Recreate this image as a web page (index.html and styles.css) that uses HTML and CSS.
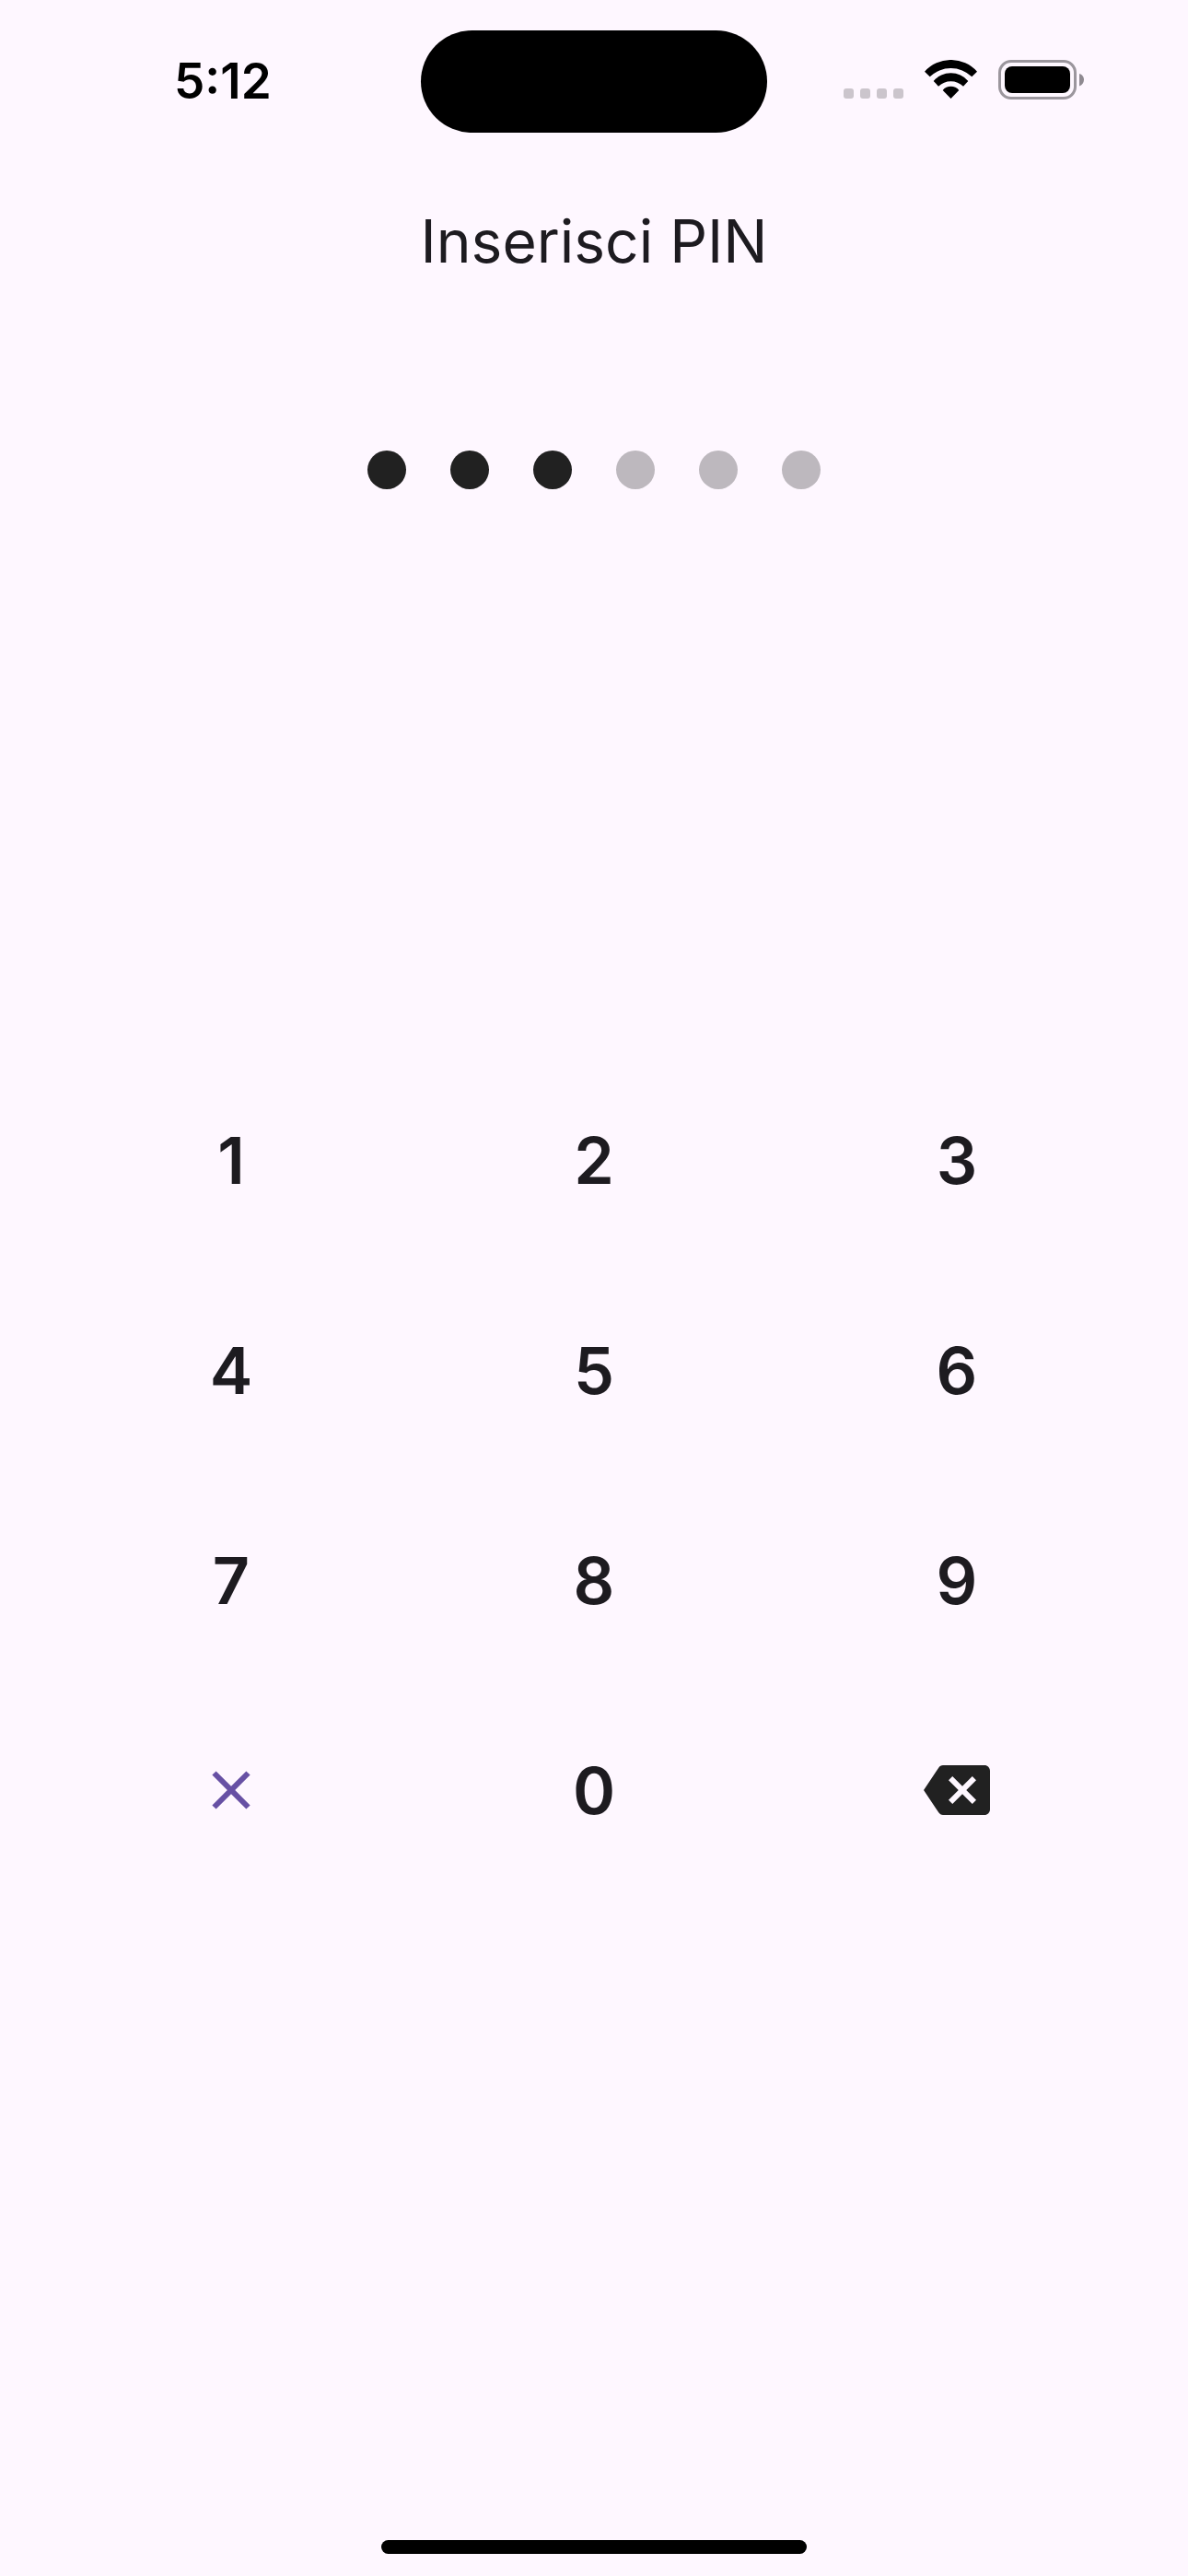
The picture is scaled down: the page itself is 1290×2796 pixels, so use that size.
FILE: index.html
```
<!DOCTYPE html>
<html lang="it">
<head>
  <meta charset="UTF-8" />
  <meta name="viewport" content="width=device-width, initial-scale=1" />
  <title>Inserisci PIN</title>
  <link rel="stylesheet" href="styles.css">
</head>
<body>
  <header class="status-bar">
    <div class="time">5:12</div>
    <div class="island"></div>
    <div class="status-icons">
      <svg width="65" height="42" viewBox="0 0 65 42" fill="#cbc5cc">
        <rect x="0" y="31" width="11" height="11" rx="3" />
        <rect x="18" y="31" width="11" height="11" rx="3" />
        <rect x="36" y="31" width="11" height="11" rx="3" />
        <rect x="54" y="31" width="11" height="11" rx="3" />
      </svg>
      <svg width="57" height="42" viewBox="0 0 57 42">
        <path d="M0 12.7A38.3 38.3 0 0 1 57 12.7L51.3 18.3A32.6 32.6 0 0 0 5.7 18.3Z" />
        <path d="M9.7 23A24.7 24.7 0 0 1 47.3 23L42 28.7A19.5 19.5 0 0 0 15 28.7Z" />
        <path d="M19.7 33A11.1 11.1 0 0 1 37.3 33L28.5 42Z" />
      </svg>
      <svg width="93" height="43" viewBox="0 0 93 43">
        <rect x="1.5" y="1.5" width="82" height="40" rx="12.5" fill="none" stroke="#9b969d" stroke-width="3" />
        <rect x="7" y="7" width="71" height="29" rx="8" />
        <path d="M88 15C91.5 16 93 19 93 21.5S91.5 27 88 28.5Z" fill="#8f8a91" />
      </svg>
    </div>
  </header>

  <main class="pin-screen">
    <h1>Inserisci PIN</h1>
    <div class="dots" id="dots">
      <span class="dot filled"></span>
      <span class="dot filled"></span>
      <span class="dot filled"></span>
      <span class="dot"></span>
      <span class="dot"></span>
      <span class="dot"></span>
    </div>
    <div class="keypad" id="keypad">
      <button type="button" class="key">1</button>
      <button type="button" class="key">2</button>
      <button type="button" class="key">3</button>
      <button type="button" class="key">4</button>
      <button type="button" class="key">5</button>
      <button type="button" class="key">6</button>
      <button type="button" class="key">7</button>
      <button type="button" class="key">8</button>
      <button type="button" class="key">9</button>
      <button type="button" class="key cancel" aria-label="Annulla">
        <svg width="42" height="42" viewBox="0 0 42 42" fill="none" stroke="currentColor" stroke-width="6">
          <path d="M2.5 2.5L39.5 39.5M39.5 2.5L2.5 39.5" />
        </svg>
      </button>
      <button type="button" class="key">0</button>
      <button type="button" class="key delete" aria-label="Cancella">
        <svg width="72" height="72" viewBox="0 0 24 24" fill="currentColor">
          <path d="M22 3H7c-.69 0-1.23.35-1.59.88L0 12l5.41 8.11c.36.53.9.89 1.59.89h15c1.1 0 2-.9 2-2V5c0-1.1-.9-2-2-2zm-3 12.59L17.59 17 14 13.41 10.41 17 9 15.59 12.59 12 9 8.41 10.41 7 14 10.59 17.59 7 19 8.41 15.41 12 19 15.59z" />
        </svg>
      </button>
    </div>
  </main>

  <div class="home-indicator"></div>

  <script>
    const dots = document.querySelectorAll('#dots .dot');
    let count = 3;

    document.getElementById('keypad').addEventListener('click', (e) => {
      const key = e.target.closest('.key');
      if (!key) return;

      if (key.classList.contains('cancel')) {
        count = 0;
      } else if (key.classList.contains('delete')) {
        count = Math.max(0, count - 1);
      } else {
        count = Math.min(dots.length, count + 1);
      }

      dots.forEach((dot, i) => dot.classList.toggle('filled', i < count));
    });
  </script>
</body>
</html>
```

FILE: styles.css
```
* {
  box-sizing: border-box;
}
body {
  margin: 0;
  min-height: 100vh;
  display: flex;
  flex-direction: column;
  background: #fef7ff;
  color: #1d1b20;
  font-family: Inter, Roboto, sans-serif;
}
svg {
  display: block;
}
.status-bar {
  display: grid;
  grid-template-columns: 1fr 376px 1fr;
  align-items: center;
  height: 177px;
  color: #000;
}
.time {
  padding: 0 0 2px 189px;
  font-size: 53px;
  line-height: 64px;
  font-weight: 600;
}
.island {
  height: 111px;
  border-radius: 56px;
  background: #000;
}
.status-icons {
  display: flex;
  justify-content: flex-end;
  gap: 23px;
  padding: 0 113px 4px 0;
}
.pin-screen {
  padding: 43px 54px;
}
h1 {
  margin: 0;
  text-align: center;
  font-size: 64px;
  line-height: 84px;
  font-weight: 400;
}
.dots {
  display: flex;
  justify-content: center;
  gap: 48px;
  margin: 185px 0 614px;
}
.dot {
  width: 42px;
  height: 42px;
  border-radius: 50%;
  background: #bdb8be;
}
.dot.filled {
  background: #212121;
}
.keypad {
  display: grid;
  grid-template-columns: repeat(3, 1fr);
  grid-auto-rows: 228px;
}
.key {
  display: flex;
  justify-content: center;
  align-items: center;
  padding: 0;
  border: none;
  border-radius: 114px;
  background: none;
  color: inherit;
  font-family: inherit;
  font-size: 70px;
  font-weight: 600;
  cursor: pointer;
}
.key:active {
  background: #ece6f0;
}
.cancel {
  color: #6750a4;
}
.delete {
  color: #212121;
}
.home-indicator {
  width: 462px;
  height: 15px;
  margin: auto auto 24px;
  border-radius: 8px;
  background: #000;
}
```
